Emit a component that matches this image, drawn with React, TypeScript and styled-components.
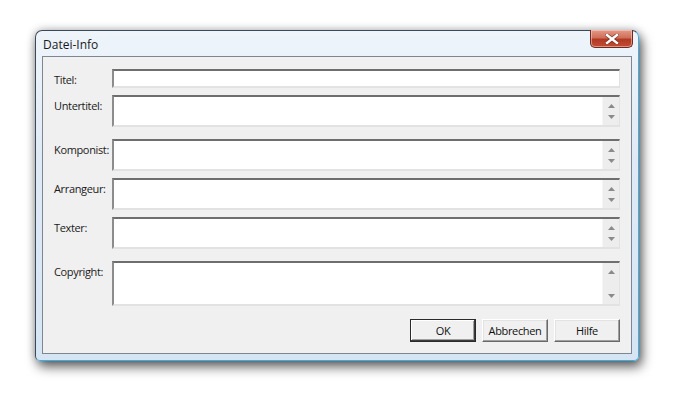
import React from "react";
import styled, { createGlobalStyle } from "styled-components";

const Global = createGlobalStyle`
  html, body { margin: 0; padding: 0; background: #ffffff; }
  body { font-family: "Open Sans", "Noto Sans", "Liberation Sans", sans-serif; }
`;

const Page = styled.div`
  width: 690px;
  height: 406px;
  padding: 30px 0 0 35px;
  box-sizing: border-box;
  background: #ffffff;
`;

const Window = styled.div`
  width: 604px;
  height: 331px;
  box-sizing: border-box;
  display: flex;
  flex-direction: column;
  border: 1px solid #3c4a58;
  border-right-color: #39aee8;
  border-bottom-color: #39aee8;
  border-radius: 7px 7px 5px 5px;
  background: linear-gradient(180deg, #eef4fa 0%, #dfeaf6 40%, #d6e5f4 100%);
  box-shadow: 3px 6px 12px rgba(0, 0, 0, 0.6), 0 0 8px rgba(0, 0, 0, 0.25);
`;

const TitleBar = styled.div`
  height: 25px;
  display: flex;
  align-items: flex-start;
  padding: 0 5px 0 7px;
`;

const Title = styled.div`
  flex: 1;
  padding-top: 6px;
  font-size: 12px;
  color: #1a1a1a;
  line-height: 16px;
`;

const CloseButton = styled.div`
  width: 43px;
  height: 18px;
  margin-top: -1px;
  box-sizing: border-box;
  border: 1px solid #6b2a22;
  border-top: none;
  border-radius: 0 0 5px 5px;
  background: linear-gradient(180deg, #e49a88 0%, #cf6f5a 45%, #b23a24 55%, #c24c33 100%);
  box-shadow: inset 0 0 0 1px rgba(255, 220, 210, 0.5);
  display: flex;
  align-items: center;
  justify-content: center;
`;

const Client = styled.div`
  flex: 1;
  margin: 0 6px 6px 6px;
  border: 1px solid #7e8791;
  background: #f0f0f0;
  padding: 12px 11px 11px 11px;
  display: flex;
  flex-direction: column;
`;

const Row = styled.div<{ $gap: number; $h: number }>`
  display: grid;
  grid-template-columns: 58px 1fr;
  margin-top: ${(p) => p.$gap}px;
  height: ${(p) => p.$h}px;
`;

const Label = styled.div`
  font-size: 11px;
  letter-spacing: -0.35px;
  line-height: 14px;
  color: #1a1a1a;
  padding: 4px 0 0 0;
`;

const Field = styled.div`
  box-sizing: border-box;
  height: 100%;
  background: #ffffff;
  border-top: 2px solid #6e6e6e;
  border-left: 2px solid #8c8c8c;
  border-right: 1px solid #e2e2e2;
  border-bottom: 2px solid #e2e2e2;
  display: flex;
  justify-content: flex-end;
`;

const ScrollBar = styled.div`
  width: 16px;
  background: #ededed;
  border-left: 1px solid #f6f6f6;
  display: flex;
  flex-direction: column;
  justify-content: space-between;
  align-items: center;
  padding: 7px 0 6px;
`;

const Buttons = styled.div`
  display: flex;
  justify-content: flex-end;
  gap: 6px;
  margin-top: 13px;
`;

const Button = styled.div<{ $default?: boolean }>`
  width: 66px;
  height: 23px;
  box-sizing: border-box;
  font-size: 11px;
  letter-spacing: -0.35px;
  color: #111;
  display: flex;
  align-items: center;
  justify-content: center;
  background: #f0f0f0;
  border: 1px solid ${(p) => (p.$default ? "#2a2a2a" : "#ffffff")};
  ${(p) =>
    p.$default
      ? "box-shadow: inset -1px -1px 0 #3c3c3c, inset 1px 1px 0 #ffffff, inset -2px -2px 0 #a0a0a0;"
      : "border-right-color:#696969;border-bottom-color:#696969;box-shadow: inset -1px -1px 0 #a0a0a0, inset 1px 1px 0 #e3e3e3;"}
`;

const Arrow = ({ up }: { up?: boolean }) => (
  <svg width="7" height="4" viewBox="0 0 7 4">
    <polygon points={up ? "3.5,0 7,4 0,4" : "0,0 7,0 3.5,4"} fill="#8a8a8a" />
  </svg>
);

const CloseIcon = () => (
  <svg width="14" height="10" viewBox="0 0 14 10">
    <path
      d="M2 1 L12 9 M12 1 L2 9"
      stroke="#5a2018"
      strokeWidth="4"
      strokeLinecap="square"
      opacity="0.6"
    />
    <path d="M2 1 L12 9 M12 1 L2 9" stroke="#ffffff" strokeWidth="2.4" strokeLinecap="square" />
  </svg>
);

type FieldDef = { label: string; gap: number; h: number; multi: boolean };

const fields: FieldDef[] = [
  { label: "Titel:", gap: 0, h: 19, multi: false },
  { label: "Untertitel:", gap: 7, h: 32, multi: true },
  { label: "Komponist:", gap: 12, h: 32, multi: true },
  { label: "Arrangeur:", gap: 7, h: 32, multi: true },
  { label: "Texter:", gap: 7, h: 32, multi: true },
  { label: "Copyright:", gap: 12, h: 45, multi: true },
];

export default function App() {
  return (
    <Page>
      <Global />
      <Window>
        <TitleBar>
          <Title>Datei-Info</Title>
          <CloseButton>
            <CloseIcon />
          </CloseButton>
        </TitleBar>
        <Client>
          {fields.map((f) => (
            <Row key={f.label} $gap={f.gap} $h={f.h}>
              <Label>{f.label}</Label>
              <Field>
                {f.multi && (
                  <ScrollBar>
                    <Arrow up />
                    <Arrow />
                  </ScrollBar>
                )}
              </Field>
            </Row>
          ))}
          <Buttons>
            <Button $default>OK</Button>
            <Button>Abbrechen</Button>
            <Button>Hilfe</Button>
          </Buttons>
        </Client>
      </Window>
    </Page>
  );
}
